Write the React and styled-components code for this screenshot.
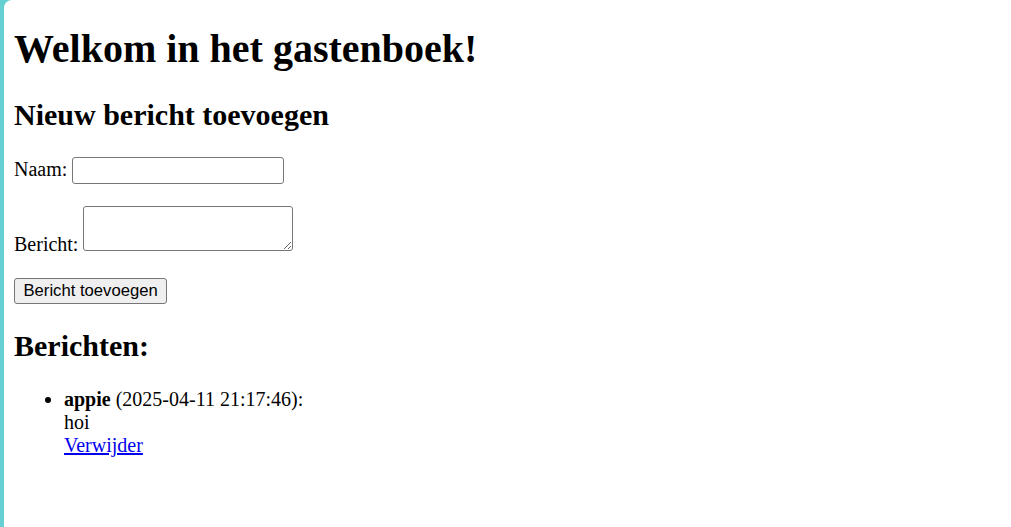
import styled, { createGlobalStyle } from 'styled-components';

const GlobalStyle = createGlobalStyle`
html, body {
  margin: 0;
  background: #66cfd2;
}
body {
  font-family: "Liberation Serif", "Times New Roman", serif;
  font-size: 20px;
  color: #000;
}
`;

const Page = styled.div`
margin-left: 4px;
min-height: 100vh;
background: #fff;
border-top-left-radius: 8px;
padding: 1px 10px;
box-sizing: border-box;
`;

const Title = styled.h1`
font-size: 40px;
margin: 23.5px 0 26.8px;
`;

const SubTitle = styled.h2`
font-size: 30px;
margin: 24.9px 0;
`;

const Field = styled.p`
margin: 20px 0 ${(p) => (p.$tall ? '22px' : '20px')};
`;

const Control = styled.input`
box-sizing: border-box;
width: 212px;
height: 27px;
padding: 1px 2px;
border: 1px solid #767676;
border-radius: 3px;
font-family: "Liberation Sans", Arial, sans-serif;
font-size: 16.67px;
background: #fff;
`;

const TextArea = styled.textarea`
box-sizing: border-box;
width: 210px;
height: 45px;
margin-top: 2px;
padding: 2px;
border: 1px solid #767676;
border-radius: 3px;
font-family: "Liberation Mono", monospace;
font-size: 16.67px;
vertical-align: baseline;
`;

const SubmitButton = styled.button`
box-sizing: border-box;
height: 25.5px;
padding: 0 8.5px;
border: 1px solid #767676;
border-radius: 3px;
background: #efefef;
color: #000;
font-family: "Liberation Sans", Arial, sans-serif;
font-size: 16.67px;
`;

const MessageList = styled.ul`
margin: 23px 0 20px;
padding-left: 50px;
`;

const DeleteLink = styled.a`
color: #0000ee;
`;

const messages = [
  { name: 'appie', date: '2025-04-11 21:17:46', text: 'hoi' },
];

function App() {
  return (
    <>
      <GlobalStyle />
      <Page>
        <Title>Welkom in het gastenboek!</Title>
        <SubTitle>Nieuw bericht toevoegen</SubTitle>
        <form onSubmit={(e) => e.preventDefault()}>
          <Field>
            <label htmlFor="naam">Naam:</label> <Control id="naam" type="text" />
          </Field>
          <Field $tall>
            <label htmlFor="bericht">Bericht:</label> <TextArea id="bericht" />
          </Field>
          <Field>
            <SubmitButton type="submit">Bericht toevoegen</SubmitButton>
          </Field>
        </form>
        <SubTitle>Berichten:</SubTitle>
        <MessageList>
          {messages.map((m) => (
            <li key={m.date}>
              <strong>{m.name}</strong> ({m.date}):<br />
              {m.text}<br />
              <DeleteLink href="#">Verwijder</DeleteLink>
            </li>
          ))}
        </MessageList>
      </Page>
    </>
  );
}

export default App;
